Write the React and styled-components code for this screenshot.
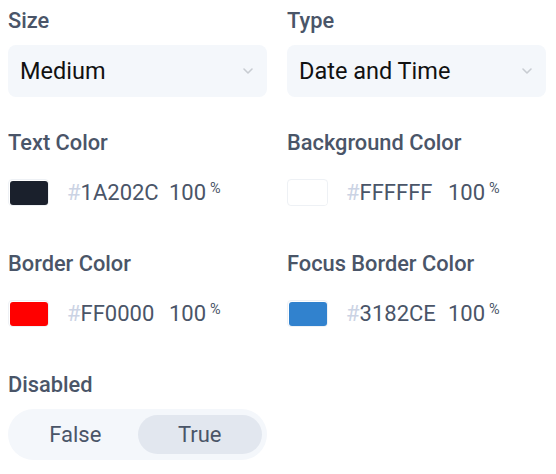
import React from "react";
import styled, { createGlobalStyle } from "styled-components";

const Global = createGlobalStyle`
  body {
    margin: 8px;
    background: #ffffff;
    font-family: Roboto, "Liberation Sans", sans-serif;
  }
`;

const Grid = styled.div`
  display: grid;
  grid-template-columns: 259px 259px;
  column-gap: 20px;
  row-gap: 34px;
  padding-top: 1px;
`;

const Field = styled.div`
  display: flex;
  flex-direction: column;
  gap: 12px;
`;

const Label = styled.div`
  font-size: 21.8px;
  line-height: 24px;
  font-weight: 500;
  color: #4a5568;
`;

const Select = styled.div`
  height: 52px;
  box-sizing: border-box;
  border-radius: 8px;
  background: #f4f7fb;
  display: flex;
  align-items: center;
  justify-content: space-between;
  padding: 0 13px 0 12px;
  font-size: 23.5px;
  color: #111111;
`;

const ColorRow = styled.div`
  height: 51px;
  display: flex;
  align-items: center;
`;

const Swatch = styled.div`
  width: 41px;
  height: 27px;
  box-sizing: border-box;
  border: 1.5px solid #eef1f5;
  border-radius: 4px;
  padding: 0.5px;
  display: flex;
`;

const SwatchFill = styled.div`
  flex: 1;
  border-radius: 3px;
  background: ${(p) => p.$color};
`;

const Hex = styled.div`
  width: 102px;
  margin-left: 18px;
  font-size: 22px;
  color: #4a5568;
  white-space: nowrap;
`;

const Hash = styled.span`
  color: #cbd3e4;
`;

const Alpha = styled.div`
  font-size: 22px;
  color: #4a5568;
  display: flex;
  align-items: flex-start;
  gap: 4px;
`;

const Percent = styled.span`
  font-size: 14.5px;
  line-height: 1;
  margin-top: 2px;
`;

const Toggle = styled.div`
  height: 51px;
  box-sizing: border-box;
  border-radius: 26px;
  background: #f4f7fb;
  padding: 6px 5px;
  display: grid;
  grid-template-columns: 1fr 1fr;
`;

const ToggleOption = styled.div`
  border-radius: 20px;
  display: flex;
  align-items: center;
  justify-content: center;
  font-size: 22px;
  color: #4a5568;
  background: ${(p) => (p.$active ? "#e2e7ef" : "transparent")};
`;

const Chevron = () => (
  <svg width="12" height="8" viewBox="0 0 12 8" fill="none">
    <path d="M2 2 L6 6 L10 2" stroke="#c8ccd2" strokeWidth="1.6" strokeLinecap="round" strokeLinejoin="round" />
  </svg>
);

const ColorField = ({ label, color, hex }) => (
  <Field>
    <Label>{label}</Label>
    <ColorRow>
      <Swatch>
        <SwatchFill $color={color} />
      </Swatch>
      <Hex>
        <Hash>#</Hash>
        {hex}
      </Hex>
      <Alpha>
        100<Percent>%</Percent>
      </Alpha>
    </ColorRow>
  </Field>
);

export default function App() {
  return (
    <>
      <Global />
      <Grid>
        <Field>
          <Label>Size</Label>
          <Select>
            <span>Medium</span>
            <Chevron />
          </Select>
        </Field>
        <Field>
          <Label>Type</Label>
          <Select>
            <span>Date and Time</span>
            <Chevron />
          </Select>
        </Field>
        <ColorField label="Text Color" color="#1A202C" hex="1A202C" />
        <ColorField label="Background Color" color="#FFFFFF" hex="FFFFFF" />
        <ColorField label="Border Color" color="#FF0000" hex="FF0000" />
        <ColorField label="Focus Border Color" color="#3182CE" hex="3182CE" />
        <Field>
          <Label>Disabled</Label>
          <Toggle>
            <ToggleOption>False</ToggleOption>
            <ToggleOption $active>True</ToggleOption>
          </Toggle>
        </Field>
      </Grid>
    </>
  );
}
